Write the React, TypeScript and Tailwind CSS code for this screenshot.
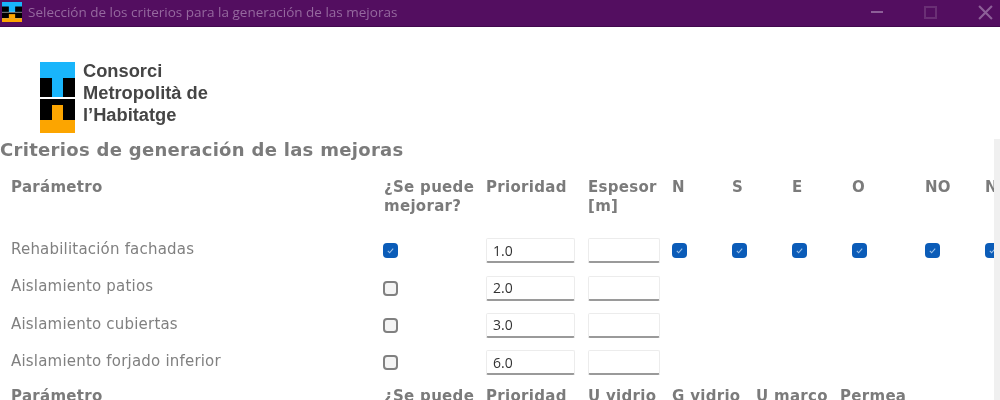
import type { ReactNode } from 'react'

const COLS = 'grid grid-cols-[373px_102px_102px_84px_60px_60px_60px_73px_60px_60px]'
const COLS_SECOND = 'grid grid-cols-[373px_102px_102px_84px_84px_84px_84px]'

const ROWS = [
  { label: 'Rehabilitación fachadas', priority: '1.0', checked: true },
  { label: 'Aislamiento patios', priority: '2.0', checked: false },
  { label: 'Aislamiento cubiertas', priority: '3.0', checked: false },
  { label: 'Aislamiento forjado inferior', priority: '6.0', checked: false },
]

const ORIENTATIONS = ['N', 'S', 'E', 'O', 'NO', 'NE']
const SECOND_HEAD = ['U vidrio', 'G vidrio', 'U marco', 'Permea']

// Logo mark, same drawing in the title bar and the page
function Mark({ className }: { className: string }) {
  return (
    <svg className={className} viewBox="0 0 35 71" preserveAspectRatio="none">
      <rect width="35" height="71" fill="#fff" />
      <rect width="35" height="35" fill="#19b5fb" />
      <rect y="16" width="12" height="19" fill="#000" />
      <rect x="23" y="16" width="12" height="19" fill="#000" />
      <rect y="37" width="35" height="21" fill="#000" />
      <rect y="58" width="35" height="13" fill="#fca500" />
      <rect x="12" y="43" width="11" height="15" fill="#fca500" />
    </svg>
  )
}

function Check({ checked }: { checked: boolean }) {
  if (!checked) {
    return <span className="block w-[15px] h-[15px] -ml-[1px] rounded-[4px] border-2 border-[#808080] bg-[#f4f4f4]" />
  }
  return (
    <span className="flex items-center justify-center w-[15px] h-[15px] -ml-[1px] rounded-[4px] bg-[#0b5cb8]">
      <svg className="w-[9px] h-[9px]" viewBox="0 0 10 10" fill="none">
        <path d="M2 5.5 4 7.5 8 3" stroke="#9fc2e8" strokeWidth="1.2" />
      </svg>
    </span>
  )
}

function Input({ value, width }: { value?: string; width: string }) {
  return (
    <div className={`${width} h-[25px] px-[6px] flex items-center bg-white border border-[#ececec] border-b-2 border-b-[#9a9a9a] rounded-[2px] text-[14px] text-[#333] font-['Open_Sans',sans-serif]`}>
      {value}
    </div>
  )
}

function Head({ children }: { children: ReactNode }) {
  return <div className="text-[15px] leading-[19px] font-bold text-[#7b7b7b] tracking-[0.3px] whitespace-nowrap">{children}</div>
}

export default function App() {
  return (
    <div className="w-[1000px] h-[400px] overflow-hidden bg-white flex flex-col font-['DejaVu_Sans',sans-serif] blur-[0.4px]">
      {/* Title bar */}
      <div className="h-[27px] shrink-0 flex items-center bg-[#530e60] border-b border-[#42094e]">
        <Mark className="w-[20px] h-[20px] ml-[2px] mb-[2px]" />
        <span className="ml-[6px] mb-[2px] text-[13.5px] text-[#96699f] font-['Open_Sans',sans-serif] whitespace-nowrap">
          Selección de los criterios para la generación de las mejoras
        </span>
        <div className="ml-auto flex items-center gap-[41px] pr-[7px] mb-[2px]">
          <span className="block w-[12px] h-[2px] bg-[#8d5f98]" />
          <span className="block w-[13px] h-[13px] border-2 border-[#6a2f75]" />
          <svg className="w-[15px] h-[15px]" viewBox="0 0 14 14" stroke="#8d5f98" strokeWidth="2">
            <path d="M1 1 13 13M13 1 1 13" />
          </svg>
        </div>
      </div>

      {/* Logo */}
      <div className="h-[112px] shrink-0 pl-[40px] pt-[35px] flex items-start gap-[8px]">
        <Mark className="w-[35px] h-[71px]" />
        <div className="text-[18.3px] leading-[22px] -mt-[2px] font-bold text-[#454545] font-['Liberation_Sans',sans-serif] whitespace-nowrap">
          <div>Consorci</div>
          <div>Metropolità de</div>
          <div>l’Habitatge</div>
        </div>
      </div>

      <div className="flex flex-1 min-h-0">
        <div className="w-[994px] overflow-hidden">
          {/* Section */}
          <div className="h-[28px] text-[18px] leading-[22px] font-bold text-[#7b7b7b] tracking-[0.3px] whitespace-nowrap">
            Criterios de generación de las mejoras
          </div>

          <div className="pl-[11px]">
            <div className={`${COLS} h-[65px] w-[1034px] pt-[11px]`}>
              <Head>Parámetro</Head>
              <Head>¿Se puede<br />mejorar?</Head>
              <Head>Prioridad</Head>
              <Head>Espesor<br />[m]</Head>
              {ORIENTATIONS.map((o) => (
                <Head key={o}>{o}</Head>
              ))}
            </div>

            {ROWS.map((row, i) => (
              <div key={row.label} className={`${COLS} h-[37.4px] w-[1034px] items-center`}>
                <div className="text-[15px] text-[#808080] tracking-[0.2px] -mt-[3px]">{row.label}</div>
                <Check checked={row.checked} />
                <Input value={row.priority} width="w-[89px]" />
                <Input width="w-[72px]" />
                {ORIENTATIONS.map((o) => (
                  <div key={o} className="ml-[1px]">{i === 0 && <Check checked />}</div>
                ))}
              </div>
            ))}

            <div className={`${COLS_SECOND} w-[1034px] mt-[5px]`}>
              <Head>Parámetro</Head>
              <Head>¿Se puede</Head>
              <Head>Prioridad</Head>
              {SECOND_HEAD.map((h) => (
                <Head key={h}>{h}</Head>
              ))}
            </div>
          </div>
        </div>
        {/* Scrollbar track */}
        <div className="w-[6px] bg-[#f0f0f0]" />
      </div>
    </div>
  )
}
